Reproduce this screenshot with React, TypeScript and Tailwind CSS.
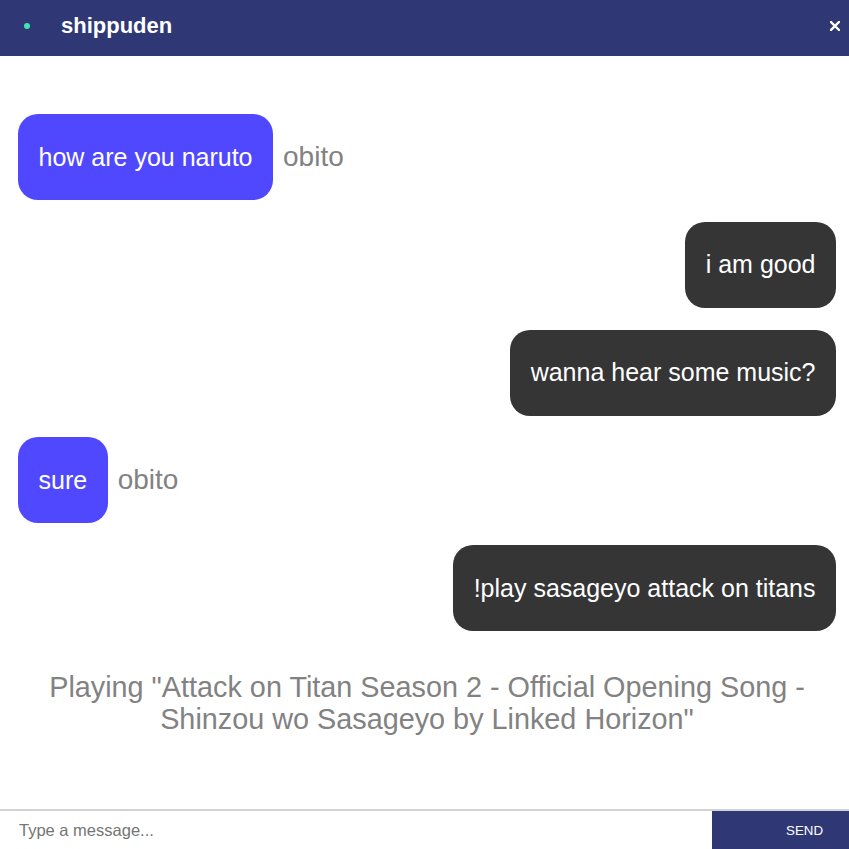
import React from "react";

type Msg = { text: string; mine: boolean; user?: string };

const messages: Msg[] = [
  { text: "how are you naruto", mine: false, user: "obito" },
  { text: "i am good", mine: true },
  { text: "wanna hear some music?", mine: true },
  { text: "sure", mine: false, user: "obito" },
  { text: "!play sasageyo attack on titans", mine: true },
];

export default function App() {
  return (
    <div
      className="h-[849px] w-full flex flex-col bg-white overflow-hidden"
      style={{ fontFamily: '"Liberation Sans", Arial, sans-serif' }}
    >
      <header className="h-[56px] shrink-0 bg-[#2f3874] flex items-center pb-[4px]">
        <span className="ml-[24px] w-[6px] h-[6px] rounded-full bg-[#3ee6b3]" />
        <span className="ml-[31px] text-[22px] font-bold text-white leading-none">shippuden</span>
        <span className="ml-auto mr-[9px] flex items-center">
          <svg width="10" height="10" viewBox="0 0 10 10">
            <path d="M1 1 L9 9 M9 1 L1 9" stroke="#fff" strokeWidth="2.4" strokeLinecap="square" />
          </svg>
        </span>
      </header>

      <main className="flex-1 flex flex-col pl-[18px] pr-[13px] pt-[58px]">
        {messages.map((m, i) =>
          m.mine ? (
            <div key={i} className="flex justify-end mb-[21.75px]">
              <div className="h-[86px] px-[20.5px] flex items-center rounded-[20px] bg-[#353535] text-white text-[25px] leading-none">
                {m.text}
              </div>
            </div>
          ) : (
            <div key={i} className="flex items-center mb-[21.75px]">
              <div className="h-[86px] px-[20.5px] flex items-center rounded-[20px] bg-[#5048ff] text-white text-[25px] leading-none">
                {m.text}
              </div>
              <span className="ml-[10px] text-[28px] text-[#828282] leading-none">{m.user}</span>
            </div>
          )
        )}
        <p className="mt-[18px] text-center text-[28.8px] leading-[32px] text-[#828282]">
          Playing "Attack on Titan Season 2 - Official Opening Song - Shinzou wo Sasageyo by Linked Horizon"
        </p>
      </main>

      <footer className="h-[40px] shrink-0 border-t-2 border-[#d3d3d3] flex">
        <input
          className="flex-1 h-full pl-[19px] text-[16.5px] outline-none placeholder:text-[#757575]"
          style={{ fontFamily: '"Liberation Sans Narrow", "Liberation Sans", Arial, sans-serif' }}
          placeholder="Type a message..."
        />
        <button className="w-[137px] h-full bg-[#2f3874] text-white text-[13.33px] flex items-center pl-[74px] pt-[1px]">
          SEND
        </button>
      </footer>
    </div>
  );
}
